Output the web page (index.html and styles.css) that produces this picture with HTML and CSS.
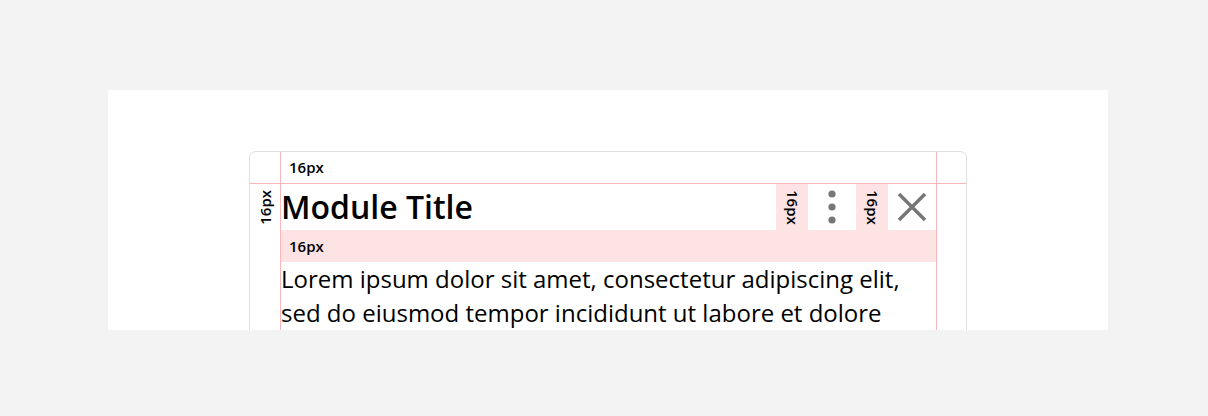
FILE: index.html
```html
<!DOCTYPE html>
<html>
<head>
    <link rel="stylesheet" href="styles.css">
    <title>module spacing</title>
</head>
<body>
    <section class="frame">
        <div class="card">
            <div class="top-space">
                <span class="tag">16px</span>
            </div>
            <div class="head">
                <div class="gutter">
                    <span class="tag tag-up">16px</span>
                </div>
                <h1 class="title">Module Title</h1>
                <div class="pad">
                    <span class="tag tag-down">16px</span>
                </div>
                <button class="icon-btn" title="More">
                    <svg width="16" height="34" viewBox="0 0 16 34">
                        <circle cx="8" cy="4" r="3.6" fill="#767676" />
                        <circle cx="8" cy="17" r="3.6" fill="#767676" />
                        <circle cx="8" cy="30" r="3.6" fill="#767676" />
                    </svg>
                </button>
                <div class="pad">
                    <span class="tag tag-down">16px</span>
                </div>
                <button class="icon-btn" title="Close">
                    <svg width="30" height="30" viewBox="0 0 30 30">
                        <path d="M2 2 L28 28 M28 2 L2 28" stroke="#767676" stroke-width="3.4" fill="none" />
                    </svg>
                </button>
            </div>
            <div class="gap-band">
                <span class="tag">16px</span>
            </div>
            <p class="text">Lorem ipsum dolor sit amet, consectetur adipiscing elit, sed do eiusmod tempor incididunt ut labore et dolore</p>
        </div>
    </section>
</body>
</html>
```

FILE: styles.css
```css
body {
    margin: 0;
    background: #f3f3f3;
    font-family: "Open Sans", "Noto Sans", sans-serif;
    color: #000;
}

.frame {
    width: 1000px;
    height: 240px;
    margin: 90px 0 0 108px;
    padding-top: 61px;
    box-sizing: border-box;
    background: #fff;
    overflow: hidden;
}

.card {
    width: 718px;
    height: 320px;
    margin: 0 auto;
    box-sizing: border-box;
    border: 1px solid #e0e0e0;
    border-radius: 7px;
    background:
        linear-gradient(#f9b7ba, #f9b7ba) 30px 0 / 1px 100% no-repeat,
        linear-gradient(#f9b7ba, #f9b7ba) right 29px top 0 / 1px 100% no-repeat,
        #fff;
}

.tag {
    font-size: 15px;
    font-weight: 600;
    line-height: 1;
}

.tag-up {
    writing-mode: vertical-rl;
    transform: rotate(180deg);
}

.tag-down {
    writing-mode: vertical-rl;
}

.top-space {
    height: 31px;
    border-bottom: 1px solid #f9b7ba;
    padding-left: 39px;
    display: flex;
    align-items: center;
}

.head {
    height: 46px;
    display: flex;
    margin-right: 30px;
}

.gutter {
    width: 30px;
    margin-right: 1px;
    display: flex;
    align-items: center;
    justify-content: center;
}

.title {
    flex: 1;
    margin: 0;
    font-size: 32px;
    font-weight: 600;
    line-height: 46px;
    white-space: nowrap;
}

.pad {
    width: 32px;
    background: #fde3e4;
    display: flex;
    align-items: center;
    justify-content: center;
}

.icon-btn {
    width: 48px;
    padding: 0;
    border: none;
    background: #fff;
    display: flex;
    align-items: center;
    justify-content: center;
}

.gap-band {
    height: 32px;
    margin: 0 30px 0 31px;
    padding-left: 8px;
    background: #fde3e4;
    display: flex;
    align-items: center;
}

.text {
    margin: 0 30px 0 31px;
    font-size: 24px;
    line-height: 34px;
}
```
